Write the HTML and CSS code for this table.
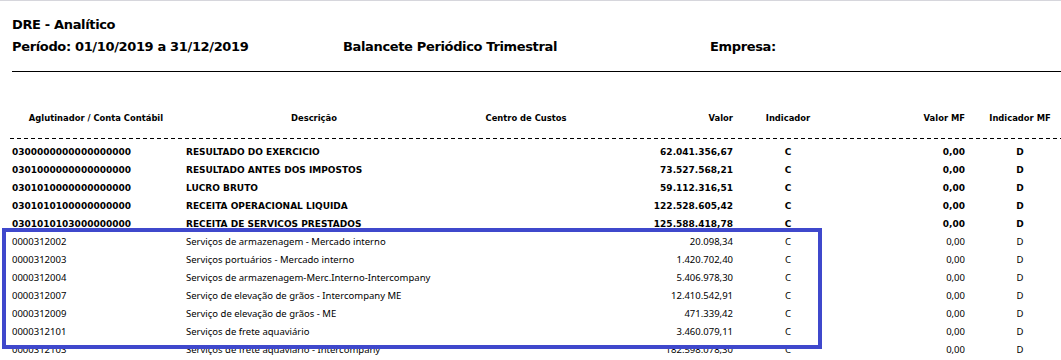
FILE: index.html
```html
<!DOCTYPE html>
<html lang="pt-BR">
<head>
<meta charset="utf-8">
<title>DRE - Analítico</title>
<link rel="stylesheet" href="styles.css">
</head>
<body>
<div class="page">
  <header class="report-head">
    <div class="title">DRE - Analítico</div>
    <div class="subline">
      <span>Período: 01/10/2019 a 31/12/2019</span>
      <span>Balancete Periódico Trimestral</span>
      <span>Empresa:</span>
    </div>
  </header>
  <div class="rule"></div>

  <div class="grid head-row">
    <div class="c1 center">Aglutinador / Conta Contábil</div>
    <div class="c2 center desc-h">Descrição</div>
    <div class="c3 center">Centro de Custos</div>
    <div class="c4 right">Valor</div>
    <div class="c5 center">Indicador</div>
    <div class="c6 right">Valor MF</div>
    <div class="c7 center">Indicador MF</div>
  </div>
  <div class="dash"></div>

  <div class="rows">
    <div class="grid row bold"><div>0300000000000000000</div><div class="desc">RESULTADO DO EXERCICIO</div><div></div><div class="right">62.041.356,67</div><div class="center">C</div><div class="right">0,00</div><div class="center c7">D</div></div>
    <div class="grid row bold"><div>0301000000000000000</div><div class="desc">RESULTADO ANTES DOS IMPOSTOS</div><div></div><div class="right">73.527.568,21</div><div class="center">C</div><div class="right">0,00</div><div class="center c7">D</div></div>
    <div class="grid row bold"><div>0301010000000000000</div><div class="desc">LUCRO BRUTO</div><div></div><div class="right">59.112.316,51</div><div class="center">C</div><div class="right">0,00</div><div class="center c7">D</div></div>
    <div class="grid row bold"><div>0301010100000000000</div><div class="desc">RECEITA OPERACIONAL LIQUIDA</div><div></div><div class="right">122.528.605,42</div><div class="center">C</div><div class="right">0,00</div><div class="center c7">D</div></div>
    <div class="grid row bold"><div>0301010103000000000</div><div class="desc">RECEITA DE SERVICOS PRESTADOS</div><div></div><div class="right">125.588.418,78</div><div class="center">C</div><div class="right">0,00</div><div class="center c7">D</div></div>
    <div class="grid row reg"><div>0000312002</div><div class="desc">Serviços de armazenagem - Mercado interno</div><div></div><div class="right">20.098,34</div><div class="center">C</div><div class="right">0,00</div><div class="center c7">D</div></div>
    <div class="grid row reg"><div>0000312003</div><div class="desc">Serviços portuários - Mercado interno</div><div></div><div class="right">1.420.702,40</div><div class="center">C</div><div class="right">0,00</div><div class="center c7">D</div></div>
    <div class="grid row reg"><div>0000312004</div><div class="desc">Serviços de armazenagem-Merc.Interno-Intercompany</div><div></div><div class="right">5.406.978,30</div><div class="center">C</div><div class="right">0,00</div><div class="center c7">D</div></div>
    <div class="grid row reg"><div>0000312007</div><div class="desc">Serviço de elevação de grãos - Intercompany ME</div><div></div><div class="right">12.410.542,91</div><div class="center">C</div><div class="right">0,00</div><div class="center c7">D</div></div>
    <div class="grid row reg"><div>0000312009</div><div class="desc">Serviço de elevação de grãos - ME</div><div></div><div class="right">471.339,42</div><div class="center">C</div><div class="right">0,00</div><div class="center c7">D</div></div>
    <div class="grid row reg"><div>0000312101</div><div class="desc">Serviços de frete aquaviário</div><div></div><div class="right">3.460.079,11</div><div class="center">C</div><div class="right">0,00</div><div class="center c7">D</div></div>
    <div class="grid row reg"><div>0000312103</div><div class="desc">Serviços de frete aquaviário - Intercompany</div><div></div><div class="right">182.598.078,30</div><div class="center">C</div><div class="right">0,00</div><div class="center c7">D</div></div>
  </div>
</div>
<div class="highlight"></div>
</body>
</html>
```

FILE: styles.css
```css
html, body {
  margin: 0;
  padding: 0;
  background: #ffffff;
  overflow: hidden;
}
body {
  width: 1061px;
  height: 360px;
  position: relative;
  color: #000;
  font-family: "DejaVu Sans", Verdana, sans-serif;
}
.page {
  border-top: 1px solid #d6d6dc;
}
.report-head {
  padding: 13px 0 0 12px;
  font-weight: bold;
  font-size: 13px;
  letter-spacing: -0.35px;
}
.title {
  line-height: 22px;
  height: 22px;
}
.subline {
  display: grid;
  grid-template-columns: 331px 367px auto;
  line-height: 22px;
  height: 22px;
}
.rule {
  margin: 13px 0 0 12px;
  height: 1px;
  background: #000;
}
.grid {
  display: grid;
  grid-template-columns: 180px 276px 140px 137px 110px 122px 96px;
  white-space: nowrap;
}
.head-row {
  margin-top: 37px;
  height: 18px;
  line-height: 18px;
  font-size: 8.4px;
  font-weight: bold;
}
.head-row .c1 { padding-left: 12px; }
.desc-h { padding-right: 8px; }
.dash {
  margin: 11px 0 0 10px;
  height: 1px;
  background: repeating-linear-gradient(to right, #000 0 4px, transparent 4px 7px);
}
.rows {
  padding-top: 4px;
}
.row {
  height: 18px;
  line-height: 18px;
}
.row > div:first-child { padding-left: 12px; }
.row .desc { padding-left: 6px; }
.bold {
  font-family: "DejaVu Sans", Verdana, sans-serif;
  font-weight: bold;
  font-size: 9px;
}
.reg {
  font-family: "Noto Sans", "Open Sans", sans-serif;
  font-size: 9.5px;
  color: #000;
}
.center { text-align: center; }
.right { text-align: right; }
.c7 { padding-left: 14px; }
.highlight {
  position: absolute;
  left: 2px;
  top: 228px;
  width: 820px;
  height: 121px;
  box-sizing: border-box;
  border: 4px solid #3f48cc;
  pointer-events: none;
}
```
